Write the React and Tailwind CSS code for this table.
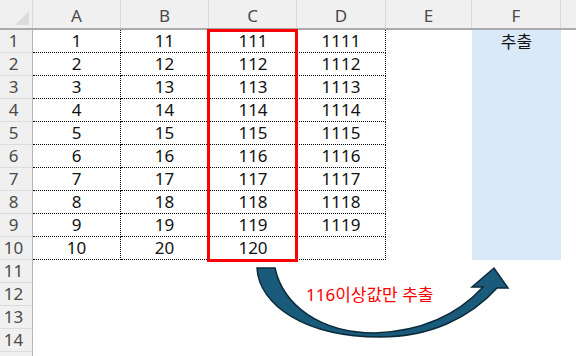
import React from "react";

const colW = [88, 88, 88, 89, 86, 89];
const letters = ["A", "B", "C", "D", "E", "F"];
const font = { fontFamily: "'Noto Sans', 'Noto Sans CJK KR', sans-serif" };

function cellClass(ci, r) {
  const base = "shrink-0 flex items-center justify-center text-[17px] text-[#111]";
  if (r <= 10 && ci <= 3) {
    const right = ci === 2 ? "" : " border-r border-dotted border-r-black";
    return base + " border-b border-dotted border-b-black" + right;
  }
  if (r <= 10 && ci === 5) return base + " bg-[#dae9f8]";
  return base;
}

export default function App() {
  const rows = Array.from({ length: 15 }, (_, i) => i + 1);
  const data = (r, ci) => {
    if (r > 10) return "";
    if (ci === 0) return String(r);
    if (ci === 1) return String(r + 10);
    if (ci === 2) return String(r + 110);
    if (ci === 3) return r <= 9 ? String(r + 1110) : "";
    if (ci === 5 && r === 1) return "추출";
    return "";
  };
  return (
    <div className="relative w-[576px] h-[356px] overflow-hidden bg-white" style={font}>
      {/* column headers */}
      <div className="flex h-[30px] bg-[#f0f0f0] border-b-2 border-b-[#ababab]">
        <div className="w-[33px] shrink-0 border-r border-r-[#d6d6d6] relative">
          <svg width="33" height="28" className="absolute left-0 top-0">
            <polygon points="15,25 29,25 29,11" fill="#dcdcdc" />
          </svg>
        </div>
        {colW.map((w, i) => (
          <div
            key={i}
            style={{ width: w }}
            className="shrink-0 flex items-center justify-center pt-[3px] text-[17px] text-[#4a4a4a] border-r border-r-[#d9d9d9]"
          >
            {letters[i]}
          </div>
        ))}
        <div className="flex-1" />
      </div>
      {/* rows */}
      {rows.map((r) => (
        <div key={r} className="flex h-[23px]">
          <div className="w-[33px] shrink-0 bg-[#f0f0f0] border-r border-r-[#b6b6b6] border-b border-b-[#dcdcdc] flex items-center justify-center pr-[5px] text-[17px] text-[#4a4a4a]">
            {r <= 14 ? r : ""}
          </div>
          {colW.map((w, ci) => (
            <div key={ci} style={{ width: w }} className={cellClass(ci, r)}>
              {data(r, ci)}
            </div>
          ))}
          <div className="flex-1" />
        </div>
      ))}
      {/* red selection border around C1:C10 */}
      <div className="absolute left-[207px] top-[29px] w-[91px] h-[233px] border-[3px] border-[#ff0000]" />
      {/* curved arrow */}
      <svg className="absolute left-0 top-0 pointer-events-none" width="576" height="356">
        <path
          d="M 257 268 C 259 305, 305 337, 380 337 C 430 337, 470 318, 497 288 L 508 288 L 494 268 L 472 287 L 483 287 C 460 312, 425 331, 375 333 C 320 333, 283 305, 275 268 Z"
          fill="#1a5a7b"
          stroke="#0c2a3a"
          strokeWidth="1.5"
          strokeLinejoin="miter"
        />
      </svg>
      <div className="absolute left-[306px] top-[285px] text-[17px] leading-[20px] text-[#ff0000] whitespace-nowrap">
        116이상값만 추출
      </div>
    </div>
  );
}
